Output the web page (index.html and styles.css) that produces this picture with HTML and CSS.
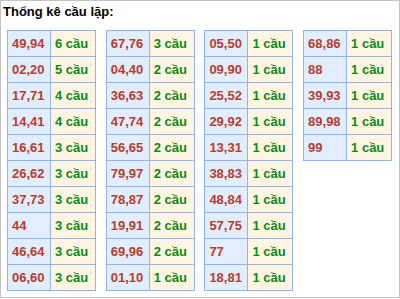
FILE: index.html
```html
<!DOCTYPE html>
<html>
<head>
<meta charset="utf-8">
<link rel="stylesheet" href="styles.css">
</head>
<body>
<div class="box">
  <div class="title">Thống kê cầu lặp:</div>
  <div class="tables">
    <table class="t">
      <tr><td class="n">49,94</td><td class="c">6 cầu</td></tr>
      <tr><td class="n">02,20</td><td class="c">5 cầu</td></tr>
      <tr><td class="n">17,71</td><td class="c">4 cầu</td></tr>
      <tr><td class="n">14,41</td><td class="c">4 cầu</td></tr>
      <tr><td class="n">16,61</td><td class="c">3 cầu</td></tr>
      <tr><td class="n">26,62</td><td class="c">3 cầu</td></tr>
      <tr><td class="n">37,73</td><td class="c">3 cầu</td></tr>
      <tr><td class="n">44</td><td class="c">3 cầu</td></tr>
      <tr><td class="n">46,64</td><td class="c">3 cầu</td></tr>
      <tr><td class="n">06,60</td><td class="c">3 cầu</td></tr>
    </table>
    <table class="t">
      <tr><td class="n">67,76</td><td class="c">3 cầu</td></tr>
      <tr><td class="n">04,40</td><td class="c">2 cầu</td></tr>
      <tr><td class="n">36,63</td><td class="c">2 cầu</td></tr>
      <tr><td class="n">47,74</td><td class="c">2 cầu</td></tr>
      <tr><td class="n">56,65</td><td class="c">2 cầu</td></tr>
      <tr><td class="n">79,97</td><td class="c">2 cầu</td></tr>
      <tr><td class="n">78,87</td><td class="c">2 cầu</td></tr>
      <tr><td class="n">19,91</td><td class="c">2 cầu</td></tr>
      <tr><td class="n">69,96</td><td class="c">2 cầu</td></tr>
      <tr><td class="n">01,10</td><td class="c">1 cầu</td></tr>
    </table>
    <table class="t">
      <tr><td class="n">05,50</td><td class="c">1 cầu</td></tr>
      <tr><td class="n">09,90</td><td class="c">1 cầu</td></tr>
      <tr><td class="n">25,52</td><td class="c">1 cầu</td></tr>
      <tr><td class="n">29,92</td><td class="c">1 cầu</td></tr>
      <tr><td class="n">13,31</td><td class="c">1 cầu</td></tr>
      <tr><td class="n">38,83</td><td class="c">1 cầu</td></tr>
      <tr><td class="n">48,84</td><td class="c">1 cầu</td></tr>
      <tr><td class="n">57,75</td><td class="c">1 cầu</td></tr>
      <tr><td class="n">77</td><td class="c">1 cầu</td></tr>
      <tr><td class="n">18,81</td><td class="c">1 cầu</td></tr>
    </table>
    <table class="t">
      <tr><td class="n">68,86</td><td class="c">1 cầu</td></tr>
      <tr><td class="n">88</td><td class="c">1 cầu</td></tr>
      <tr><td class="n">39,93</td><td class="c">1 cầu</td></tr>
      <tr><td class="n">89,98</td><td class="c">1 cầu</td></tr>
      <tr><td class="n">99</td><td class="c">1 cầu</td></tr>
    </table>
  </div>
</div>
</body>
</html>
```
FILE: styles.css
```css
html, body {
  margin: 0;
  padding: 0;
  background: #fff;
}
.box {
  box-sizing: border-box;
  width: 400px;
  height: 298px;
  border: 1px solid #c4c4c4;
  padding: 3px 0 0 6px;
  font-family: "Liberation Sans", Arial, sans-serif;
}
.title {
  font-size: 13px;
  font-weight: bold;
  line-height: 15px;
  color: #000;
  margin-left: -4px;
  margin-bottom: 11px;
}
.tables {
  display: flex;
  align-items: flex-start;
  gap: 9.7px;
}
.t {
  border-collapse: collapse;
  table-layout: fixed;
  width: 89px;
}
.t td {
  border: 1px solid #8fb3f5;
  height: 26px;
  padding: 0 0 0 4px;
  font-size: 13px;
  font-weight: bold;
  line-height: 15px;
  white-space: nowrap;
  box-sizing: border-box;
}
.n {
  width: 43px;
  background: #e1eeff;
  color: #b83c2a;
}
.c {
  width: 45px;
  background: #fff5e2;
  color: #0b8a16;
}
```
